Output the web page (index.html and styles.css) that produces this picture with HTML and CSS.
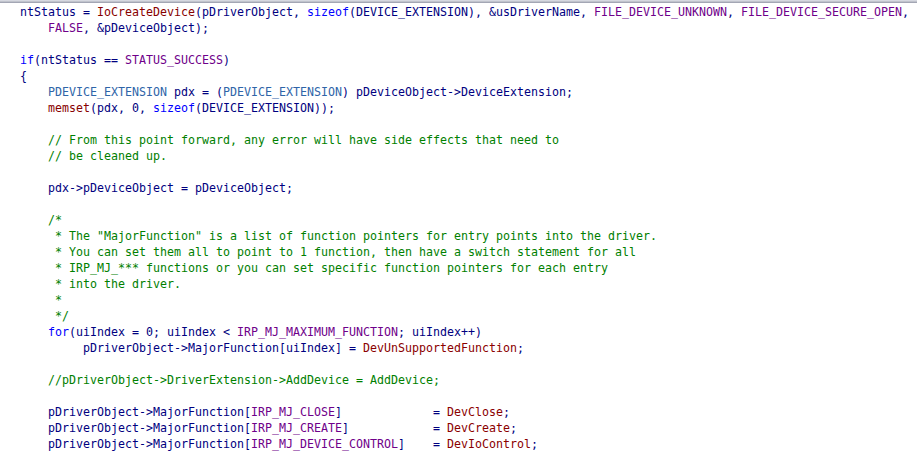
FILE: index.html
```html
<!DOCTYPE html>
<html>
<head>
<meta charset="utf-8">
<link rel="stylesheet" href="styles.css">
</head>
<body>
<div class="topline"></div>
<pre class="code"><span class="id">ntStatus = </span><span class="fn">IoCreateDevice</span><span class="id">(pDriverObject, </span><span class="kw">sizeof</span><span class="id">(DEVICE_EXTENSION), &amp;usDriverName, </span><span class="mac">FILE_DEVICE_UNKNOWN</span><span class="id">, </span><span class="mac">FILE_DEVICE_SECURE_OPEN</span><span class="id">,</span>
<span class="id">    </span><span class="mac">FALSE</span><span class="id">, &amp;pDeviceObject);</span>

<span class="kw">if</span><span class="id">(ntStatus == </span><span class="mac">STATUS_SUCCESS</span><span class="id">)</span>
<span class="id">{</span>
<span class="id">    </span><span class="ty">PDEVICE_EXTENSION</span><span class="id"> pdx = (</span><span class="ty">PDEVICE_EXTENSION</span><span class="id">) pDeviceObject-&gt;DeviceExtension;</span>
<span class="id">    </span><span class="fn">memset</span><span class="id">(pdx, 0, </span><span class="kw">sizeof</span><span class="id">(DEVICE_EXTENSION));</span>

<span class="cm">    // From this point forward, any error will have side effects that need to</span>
<span class="cm">    // be cleaned up.</span>

<span class="id">    pdx-&gt;pDeviceObject = pDeviceObject;</span>

<span class="cm">    /*</span>
<span class="cm">     * The "MajorFunction" is a list of function pointers for entry points into the driver.</span>
<span class="cm">     * You can set them all to point to 1 function, then have a switch statement for all</span>
<span class="cm">     * IRP_MJ_*** functions or you can set specific function pointers for each entry</span>
<span class="cm">     * into the driver.</span>
<span class="cm">     *</span>
<span class="cm">     */</span>
<span class="id">    </span><span class="kw">for</span><span class="id">(uiIndex = 0; uiIndex &lt; </span><span class="mac">IRP_MJ_MAXIMUM_FUNCTION</span><span class="id">; uiIndex++)</span>
<span class="id">         pDriverObject-&gt;MajorFunction[uiIndex] = </span><span class="fn2">DevUnSupportedFunction</span><span class="id">;</span>

<span class="cm">    //pDriverObject-&gt;DriverExtension-&gt;AddDevice = AddDevice;</span>

<span class="id">    pDriverObject-&gt;MajorFunction[</span><span class="mac">IRP_MJ_CLOSE</span><span class="id">]             = </span><span class="fn2">DevClose</span><span class="id">;</span>
<span class="id">    pDriverObject-&gt;MajorFunction[</span><span class="mac">IRP_MJ_CREATE</span><span class="id">]            = </span><span class="fn2">DevCreate</span><span class="id">;</span>
<span class="id">    pDriverObject-&gt;MajorFunction[</span><span class="mac">IRP_MJ_DEVICE_CONTROL</span><span class="id">]    = </span><span class="fn2">DevIoControl</span><span class="id">;</span></pre>
</body>
</html>
```
FILE: styles.css
```css
html, body {
  margin: 0;
  padding: 0;
  background: #ffffff;
}

.topline {
  height: 1px;
  border-top: 1px solid #d6d8e0;
  border-bottom: 1px solid #a3a6b4;
  background: #c0c3cc;
}

.code {
  margin: 0;
  padding: 1px 0 0 20px;
  font-family: "DejaVu Sans Mono", "Liberation Mono", monospace;
  font-size: 11.63px;
  line-height: 16px;
  color: #000080;
  white-space: pre;
}

.id { color: #000080; }
.kw { color: #0000ff; }
.fn { color: #880000; }
.fn2 { color: #8b0000; }
.mac { color: #6f008a; }
.ty { color: #2e64a8; }
.cm { color: #008000; }
```
